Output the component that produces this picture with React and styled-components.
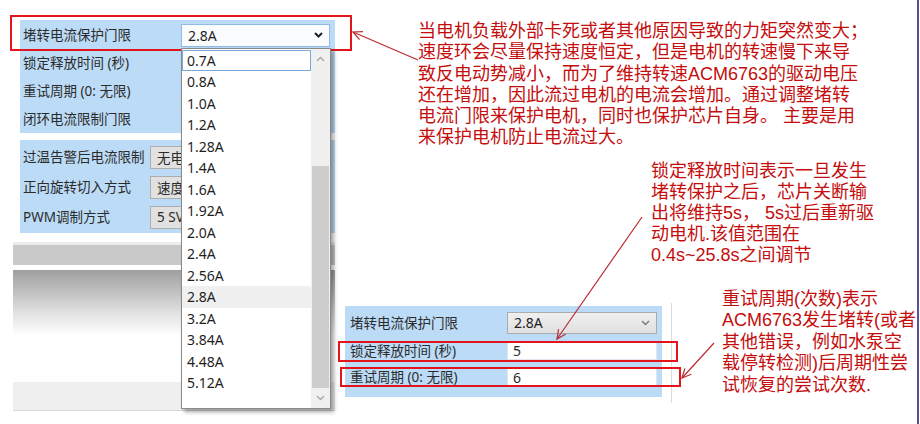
import React from 'react';
import styled, { createGlobalStyle } from 'styled-components';

const GlobalStyle = createGlobalStyle`
  html, body {
    margin: 0;
    padding: 0;
    background: #fff;
  }
  body {
    width: 920px;
    height: 424px;
    overflow: hidden;
  }
`

const Page = styled.div`
  position: relative;
  width: 919px;
  height: 424px;
  box-sizing: border-box;
  border-right: 2px solid #5a4f9c;
  display: grid;
  grid-template-columns: 340px 1fr;
  font-family: "Noto Sans", "Noto Sans CJK SC", sans-serif;
  color: #2b2b2b;
`

/* ---- the captured settings window on the left ---- */

const AppShot = styled.div`
  display: flex;
  flex-direction: column;
  padding: 20px 0 0 13px;
`

const Panel = styled.div`
  margin: ${p => p.$mt || 0}px 0 0 ${p => p.$ml || 0}px;
  width: ${p => p.$w}px;
  box-sizing: border-box;
  padding: ${p => p.$pad};
  background: #bcdbf6;
  display: grid;
  grid-template-columns: ${p => p.$cols};
  grid-template-rows: ${p => p.$rows};
  align-items: center;
`

const Label = styled.span`
  font-size: 13.5px;
  line-height: 16px;
  white-space: nowrap;
`

const Marked = styled.div`
  position: relative;
  grid-column: 1 / -1;
  display: grid;
  grid-template-columns: inherit;
  align-items: center;
  align-self: stretch;
  &::after {
    content: "";
    position: absolute;
    top: ${p => p.$t}px;
    bottom: ${p => p.$b}px;
    left: ${p => p.$l}px;
    right: ${p => p.$r}px;
    border: 2px solid #e3141c;
    pointer-events: none;
  }
`

const SelectBox = styled.div`
  position: relative;
  height: ${p => p.$h}px;
  box-sizing: border-box;
  display: flex;
  align-items: center;
  justify-content: space-between;
  padding: 0 6px 0 6px;
  font-size: 14px;
  border: 1px solid ${p => (p.$open ? '#8fbbe6' : '#acacac')};
  background: ${p => (p.$open ? '#fbfcfe' : 'linear-gradient(#efefef, #e0e0e0)')};
  color: #1e1e1e;
  z-index: ${p => (p.$open ? 3 : 'auto')};
`

const Button = styled.div`
  width: 110px;
  height: 23px;
  box-sizing: border-box;
  display: flex;
  align-items: center;
  padding-left: 6px;
  font-size: 13.5px;
  background: #e1e1e1;
  border: 1px solid #adadad;
  white-space: nowrap;
  overflow: hidden;
`

const Field = styled.div`
  height: ${p => p.$h}px;
  box-sizing: border-box;
  display: flex;
  align-items: center;
  padding-left: 5px;
  font-size: 14px;
  background: #fff;
  border: 1px solid #dfe6ee;
  width: 150px;
`

const Dropdown = styled.div`
  position: absolute;
  left: -1px;
  top: 23px;
  width: 150px;
  height: 361px;
  box-sizing: border-box;
  border: 1px solid #8a8a8a;
  background: #fff;
  box-shadow: 3px 3px 4px rgba(0, 0, 0, 0.35);
  display: flex;
`

const OptionList = styled.div`
  flex: 1;
  padding-top: 1px;
`

const Option = styled.div`
  height: 21.5px;
  box-sizing: border-box;
  display: flex;
  align-items: center;
  padding-left: 4px;
  font-size: 14px;
  color: #1f1f1f;
  background: ${p => (p.$current ? '#f0f0f0' : 'transparent')};
  border: 1px solid ${p => (p.$focus ? '#7aa8dc' : 'transparent')};
`

const ScrollBar = styled.div`
  width: 19px;
  background: #f0f0f0;
  display: flex;
  flex-direction: column;
`

const ScrollBtn = styled.div`
  height: 20px;
  display: flex;
  align-items: center;
  justify-content: center;
`

const Track = styled.div`
  flex: 1;
  display: flex;
  flex-direction: column;
  padding: 97px 1px 0 1px;
`

const Thumb = styled.div`
  flex: 1;
  background: #cdcdcd;
`

const Band = styled.div`
  width: 322px;
  margin-top: ${p => p.$mt || 0}px;
  height: ${p => p.$h}px;
  background: ${p => p.$bg};
`

/* ---- notes on the right ---- */

const Notes = styled.div`
  display: flex;
  flex-direction: column;
  padding-top: 21px;
`

const Note = styled.div`
  margin: ${p => p.$mt || 0}px 0 0 ${p => p.$ml || 0}px;
  font-family: "Liberation Sans", "Noto Sans CJK SC", sans-serif;
  font-size: 18px;
  line-height: ${p => p.$lh}px;
  color: #c40d0d;
  white-space: nowrap;
`

const Line = styled.div``

const BottomRow = styled.div`
  display: flex;
  align-items: flex-start;
  margin-top: 22.5px;
`

const ShotFrame = styled.div`
  margin: 14px 0 0 5px;
  padding: 3px 9px 6px 0;
  border-right: 1px solid #dcdcdc;
`

const Overlay = styled.svg`
  position: absolute;
  left: 0;
  top: 0;
  pointer-events: none;
`

const Chevron = ({ color = '#333', up = false, w = 2 }) => (
  <svg width="9" height="6" viewBox="0 0 9 6">
    <path
      d={up ? 'M1 5l3.5-3.5L8 5' : 'M1 1l3.5 3.5L8 1'}
      fill="none"
      stroke={color}
      strokeWidth={w}
    />
  </svg>
)

function Arrow({ from, to }) {
  const [x1, y1] = from
  const [x2, y2] = to
  const ang = Math.atan2(y1 - y2, x1 - x2)
  const len = 10
  const spread = 0.45
  const a = [x2 + len * Math.cos(ang + spread), y2 + len * Math.sin(ang + spread)]
  const b = [x2 + len * Math.cos(ang - spread), y2 + len * Math.sin(ang - spread)]
  return (
    <g stroke="#bd2a30" strokeWidth="1.2" fill="none">
      <line x1={x1} y1={y1} x2={x2} y2={y2} />
      <polyline points={`${a[0]},${a[1]} ${x2},${y2} ${b[0]},${b[1]}`} />
    </g>
  )
}

const options = ['0.7A', '0.8A', '1.0A', '1.2A', '1.28A', '1.4A', '1.6A', '1.92A',
  '2.0A', '2.4A', '2.56A', '2.8A', '3.2A', '3.84A', '4.48A', '5.12A']

const noteStall = [
  '当电机负载外部卡死或者其他原因导致的力矩突然变大；',
  '速度环会尽量保持速度恒定，但是电机的转速慢下来导',
  '致反电动势减小，而为了维持转速ACM6763的驱动电压',
  '还在增加，因此流过电机的电流会增加。通过调整堵转',
  '电流门限来保护电机，同时也保护芯片自身。 主要是用',
  '来保护电机防止电流过大。',
]

const noteLock = [
  '锁定释放时间表示一旦发生',
  '堵转保护之后，芯片关断输',
  '出将维持5s， 5s过后重新驱',
  '动电机.该值范围在',
  '0.4s~25.8s之间调节',
]

const noteRetry = [
  '重试周期(次数)表示',
  'ACM6763发生堵转(或者',
  '其他错误，例如水泵空',
  '载停转检测)后周期性尝',
  '试恢复的尝试次数.',
]

export default function App() {
  return (
    <Page>
      <GlobalStyle />
      <AppShot>
        <Panel $ml={7} $w={315} $pad="1px 5px 0 3px" $cols="158px 149px" $rows="repeat(4, 28px)">
          <Marked $t={-6} $b={-2} $l={-13} $r={-22}>
            <Label>堵转电流保护门限</Label>
            <SelectBox $h={23} $open>
              <span>2.8A</span>
              <Chevron color="#222" />
              <Dropdown>
                <OptionList>
                  {options.map((o, i) => (
                    <Option key={o} $focus={i === 0} $current={o === '2.8A'}>{o}</Option>
                  ))}
                </OptionList>
                <ScrollBar>
                  <ScrollBtn><Chevron up color="#a6a6a6" w={1.3} /></ScrollBtn>
                  <Track><Thumb /></Track>
                  <ScrollBtn><Chevron color="#a6a6a6" w={1.3} /></ScrollBtn>
                </ScrollBar>
              </Dropdown>
            </SelectBox>
          </Marked>
          <Label>锁定释放时间 (秒)</Label>
          <span />
          <Label>重试周期 (0: 无限)</Label>
          <span />
          <Label>闭环电流限制门限</Label>
          <span />
        </Panel>

        <Panel $ml={7} $mt={7} $w={315} $pad="2px 5px 1px 3px" $cols="127px 1fr" $rows="repeat(3, 30px)">
          <Label>过温告警后电流限制</Label>
          <Button>无电</Button>
          <Label>正向旋转切入方式</Label>
          <Button>速度</Button>
          <Label>PWM调制方式</Label>
          <Button>5 SV</Button>
        </Panel>

        <Band $mt={9} $h={3} $bg="#ececec" />
        <Band $h={20} $bg="#c9c9c9" />
        <Band $mt={5} $h={66} $bg="linear-gradient(#9f9f9f, #e6e6e6 70%, #fff)" />
        <Band $mt={46} $h={28} $bg="#efefef" />
        <Band $h={1} $bg="#d6d6d6" />
      </AppShot>

      <Notes>
        <Note $ml={78} $lh={21.3}>
          {noteStall.map(l => <Line key={l}>{l}</Line>)}
        </Note>
        <Note $ml={311} $mt={12.5} $lh={21}>
          {noteLock.map(l => <Line key={l}>{l}</Line>)}
        </Note>
        <BottomRow>
          <ShotFrame>
            <Panel $w={317} $pad="3px 5px 7px 5px" $cols="157px 150px" $rows="28px 28px 25px">
              <Label>堵转电流保护门限</Label>
              <SelectBox $h={22}>
                <span>2.8A</span>
                <Chevron color="#7a7a7a" w={1.4} />
              </SelectBox>
              <Marked $t={4} $b={3} $l={-12} $r={-21}>
                <Label>锁定释放时间 (秒)</Label>
                <Field $h={18}>5</Field>
              </Marked>
              <Marked $t={2} $b={3} $l={-10} $r={-24}>
                <Label>重试周期 (0: 无限)</Label>
                <Field $h={18}>6</Field>
              </Marked>
            </Panel>
          </ShotFrame>
          <Note $ml={50} $lh={21.5}>
            {noteRetry.map(l => <Line key={l}>{l}</Line>)}
          </Note>
        </BottomRow>
      </Notes>

      <Overlay width="920" height="424" viewBox="0 0 920 424">
        <Arrow from={[418, 60]} to={[353, 32]} />
        <Arrow from={[642, 217]} to={[557, 339]} />
        <Arrow from={[714, 343]} to={[682, 378]} />
      </Overlay>
    </Page>
  )
}
